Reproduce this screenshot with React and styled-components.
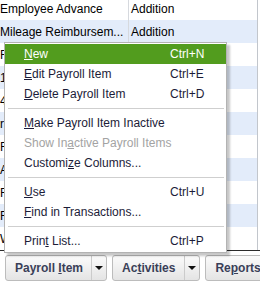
import React from 'react';
import styled, { createGlobalStyle } from 'styled-components';

const GlobalStyle = createGlobalStyle`
  * {
    margin: 0;
    padding: 0;
    box-sizing: border-box;
  }
  html, body {
    background: #fff;
    overflow: hidden;
    font-family: 'Liberation Sans', Arial, sans-serif;
  }
`;

const Screen = styled.div`
  position: relative;
  width: 260px;
  height: 283px;
  overflow: hidden;
  display: flex;
  flex-direction: column;
`;

const List = styled.div`
  height: 251px;
  overflow: hidden;
  border-bottom: 1px solid #2b2b2b;
`;

const Rows = styled.div`
  margin-top: -3px;
`;

const Row = styled.div`
  display: grid;
  grid-template-columns: 129px 1fr;
  width: 258px;
  height: 23px;
  background: ${(p) => (p.$alt ? '#e3ecfa' : '#fff')};
  border-right: 1px solid #c2c6cc;
  font-size: 12px;
  color: #000;
`;

const NameCell = styled.div`
  display: flex;
  align-items: center;
  border-right: 1px solid #d6d9de;
  white-space: nowrap;
  overflow: hidden;
`;

const TypeCell = styled.div`
  display: flex;
  align-items: center;
  padding-left: 2px;
  white-space: nowrap;
`;

const Toolbar = styled.div`
  display: flex;
  gap: 5px;
  padding: 4px 0 0 5px;
  height: 32px;
  background: #fff;
`;

const Button = styled.div`
  display: flex;
  flex-shrink: 0;
  height: 26px;
  border: 1px solid #bcbcbc;
  border-radius: 3px;
  background: linear-gradient(#fbfbfb, #e4e4e4);
  font-size: 12px;
  font-weight: bold;
  color: #3a3f58;
  white-space: nowrap;
`;

const Label = styled.div`
  display: flex;
  align-items: center;
  padding: 0 ${(p) => p.$right || 9}px 0 ${(p) => p.$left || 9}px;
`;

const ArrowPart = styled.div`
  width: 15px;
  display: flex;
  align-items: center;
  justify-content: center;
  border-left: 1px solid #cbcbcb;

  &::after {
    content: '';
    border-left: 4px solid transparent;
    border-right: 4px solid transparent;
    border-top: 4px solid #111;
  }
`;

const Key = styled.span`
  text-decoration: underline;
`;

const Menu = styled.div`
  position: absolute;
  left: 4px;
  top: 42px;
  width: 223px;
  padding: 1px 0;
  background: #fff;
  border: 1px solid #b3b3b3;
  box-shadow: 3px 3px 2px rgba(0, 0, 0, 0.22);
`;

const MenuItem = styled.div`
  display: grid;
  grid-template-columns: 146px auto;
  align-items: center;
  height: 20px;
  padding-left: 19px;
  font-size: 12px;
  white-space: nowrap;
  background: ${(p) => (p.$active ? '#529c1e' : 'transparent')};
  color: ${(p) => (p.$active ? '#fff' : p.$disabled ? '#a3a3a3' : '#1c1c38')};
`;

const Separator = styled.div`
  margin: 4px 2px 4px 3px;
  border-top: 1px solid #cfcfcf;
`;

const rows = [
  ['Employee Advance', 'Addition'],
  ['Mileage Reimbursem...', 'Addition'],
  ['Federal Withholding', 'Federal Tax'],
  ['125 Health', 'Deduction'],
  ['401k Employee', 'Deduction'],
  ['r Medicare', 'Federal Tax'],
  ['FICA Company', 'Federal Tax'],
  ['Advance Earned Inc.', 'Federal Tax'],
  ['Federal Unemploym...', 'Federal Tax'],
  ['FICA Employee', 'Federal Tax'],
  ['Workers Comp', 'Other Tax'],
];

function App() {
  return (
    <>
      <GlobalStyle />
      <Screen>
        <List>
          <Rows>
            {rows.map(([name, type], i) => (
              <Row key={i} $alt={i % 2 === 1}>
                <NameCell>{name}</NameCell>
                <TypeCell>{type}</TypeCell>
              </Row>
            ))}
          </Rows>
        </List>
        <Toolbar>
          <Button>
            <Label $left={9} $right={8}>
              Payroll&nbsp;<Key>I</Key>tem
            </Label>
            <ArrowPart />
          </Button>
          <Button>
            <Label $left={9} $right={9}>
              Ac<Key>t</Key>ivities
            </Label>
            <ArrowPart />
          </Button>
          <Button>
            <Label $left={9} $right={9}>
              Re<Key>p</Key>orts
            </Label>
            <ArrowPart />
          </Button>
        </Toolbar>
        <Menu>
          <MenuItem $active>
            <span>
              <Key>N</Key>ew
            </span>
            <span>Ctrl+N</span>
          </MenuItem>
          <MenuItem>
            <span>
              <Key>E</Key>dit Payroll Item
            </span>
            <span>Ctrl+E</span>
          </MenuItem>
          <MenuItem>
            <span>
              <Key>D</Key>elete Payroll Item
            </span>
            <span>Ctrl+D</span>
          </MenuItem>
          <Separator />
          <MenuItem>
            <span>
              <Key>M</Key>ake Payroll Item Inactive
            </span>
          </MenuItem>
          <MenuItem $disabled>
            <span>
              Show In<Key>a</Key>ctive Payroll Items
            </span>
          </MenuItem>
          <MenuItem>
            <span>
              Customi<Key>z</Key>e Columns...
            </span>
          </MenuItem>
          <Separator />
          <MenuItem>
            <span>
              <Key>U</Key>se
            </span>
            <span>Ctrl+U</span>
          </MenuItem>
          <MenuItem>
            <span>
              <Key>F</Key>ind in Transactions...
            </span>
          </MenuItem>
          <Separator />
          <MenuItem>
            <span>
              Prin<Key>t</Key> List...
            </span>
            <span>Ctrl+P</span>
          </MenuItem>
        </Menu>
      </Screen>
    </>
  );
}

export default App;
